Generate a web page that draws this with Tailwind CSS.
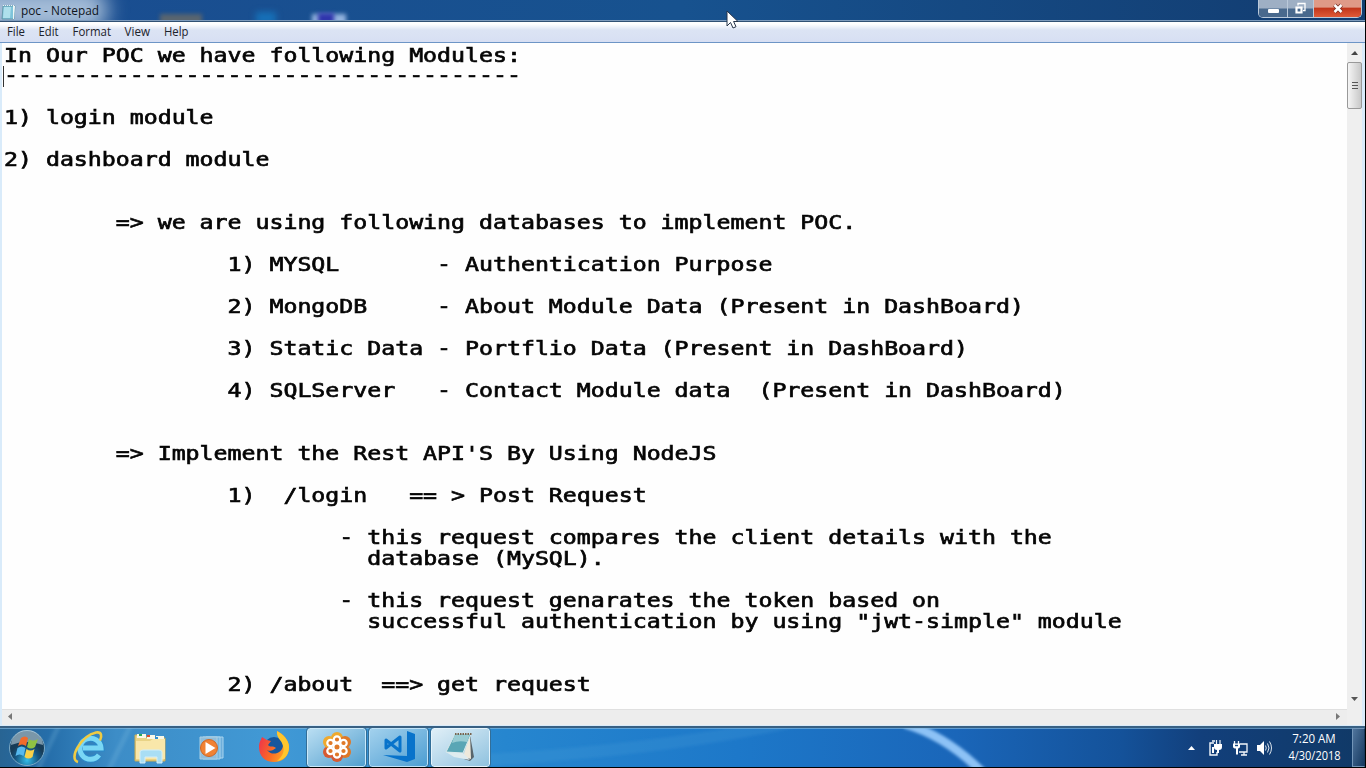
<!DOCTYPE html>
<html lang="en">
<head>
<meta charset="utf-8">
<title>poc - Notepad</title>
<script src="https://cdn.jsdelivr.net/npm/@tailwindcss/browser@4"></script>
</head>
<body class="w-[1366px] h-[768px] overflow-hidden bg-black font-['Open_Sans','Noto_Sans',sans-serif]">
<div class="flex h-[768px] w-[1366px] flex-col">
  <!-- Notepad window -->
  <main class="flex h-[726px] w-[1365px] flex-col bg-[#d9ebfa]">
    <header class="relative flex h-[21px] shrink-0 items-start justify-between overflow-hidden border-b border-[#7f9cbd] bg-linear-to-r from-[#1a4d91] via-[#17528f] to-[#123c70]">
      <div class="absolute -left-8 -top-3 h-[44px] w-[140px] rounded-full bg-[#d3e1ef]/75 blur-[10px]"></div>
      <div class="absolute left-[160px] top-[14px] h-3 w-[42px] bg-[#59656f] blur-[2px]"></div>
      <div class="absolute left-[256px] top-[12px] h-3 w-5 bg-[#1670b8] blur-[3px]"></div>
      <div class="absolute left-[312px] top-[14px] h-3 w-[34px] bg-[#93b3df] blur-[2px]"></div>
      <div class="absolute left-[318px] top-[13px] h-3 w-[16px] bg-[#2f35ac] blur-[2px]"></div>
      <div class="relative flex items-center">
        <svg class="ml-px mt-[2px]" width="15" height="16" viewBox="0 0 15 16"><path d="M2 2h12l-1 13H1z" fill="#7fc4da" stroke="#568999" stroke-width=".7"/><path d="M3 3h7l-1 11H2z" fill="#aee0ec"/><path d="M12 2h2l-1 13h-1z" fill="#eef6f6"/><path d="M2 1.500h12" stroke="#e5f4f6" stroke-dasharray="1 1"/></svg>
        <svg class="ml-[5px] mt-px" width="100" height="20"><text x="0" y="13.5" textLength="78" lengthAdjust="spacingAndGlyphs" font-size="11.8" fill="#10151c">poc - Notepad</text></svg>
      </div>
      <div class="relative mr-[3px] flex h-[18px] w-[104px] overflow-hidden rounded-b-[5px] border border-t-0 border-[#bac9da]">
        <div class="flex w-[29px] items-center justify-center border-r border-[#bac9da] bg-linear-to-b from-[#9eafc4] from-45% to-[#49698d] to-55%"><span class="mt-[4px] h-[4px] w-[11px] rounded-[1px] bg-white"></span></div>
        <div class="flex w-[26px] items-center justify-center border-r border-[#bac9da] bg-linear-to-b from-[#9eafc4] from-45% to-[#49698d] to-55%"><svg class="-ml-[2px]" width="14" height="14" viewBox="0 0 14 14" fill="none"><path d="M5 3.500V1.500h7v7h-2" stroke="#fff" stroke-width="1.3"/><path d="M3.500 5.500h5v5h-5z" stroke="#fff" stroke-width="2.200"/></svg></div>
        <div class="flex flex-1 items-center justify-center bg-linear-to-b from-[#df9a87] from-40% via-[#c2371c] via-50% to-[#df5a37]"><svg width="14" height="14" viewBox="0 0 14 14"><path d="M3.500 3l7 7m0-7l-7 7" stroke="#793024" stroke-width="4"/><path d="M3.500 3l7 7m0-7l-7 7" stroke="#fff" stroke-width="2.500"/></svg></div>
      </div>
    </header>
    <nav class="h-[22px] shrink-0 border-t border-b border-t-[#315174] border-b-[#6d95c6] bg-linear-to-b from-white from-10% via-[#dce4f4] via-40% to-[#d7dff3]">
      <svg class="block" width="220" height="20" font-size="11.8" fill="#1c222b"><text x="7" y="14.3" textLength="18" lengthAdjust="spacingAndGlyphs">File</text><text x="38.5" y="14.3" textLength="20" lengthAdjust="spacingAndGlyphs">Edit</text><text x="72.500" y="14.3" textLength="38.500" lengthAdjust="spacingAndGlyphs">Format</text><text x="124.5" y="14.3" textLength="25.500" lengthAdjust="spacingAndGlyphs">View</text><text x="164" y="14.3" textLength="24.500" lengthAdjust="spacingAndGlyphs">Help</text></svg>
    </nav>
    <div class="flex min-h-0 flex-1 pl-[2px] pr-[3px]">
      <section class="flex min-w-0 flex-1 flex-col">
        <div class="relative h-[666px] overflow-hidden bg-[#fefefe] pl-[1.5px]">
          <span class="absolute left-px top-[23px] h-[21px] w-px bg-[#333]"></span>
          <pre class="origin-top-left scale-x-[1.2213] pt-[1.5px] font-['DejaVu_Sans_Mono',monospace] text-[19px] leading-[20.97px] text-[#050505] [-webkit-text-stroke:0.65px_#050505] [tab-size:8]">In Our POC we have following Modules:
-------------------------------------

1) login module

2) dashboard module


	=> we are using following databases to implement POC.

		1) MYSQL       - Authentication Purpose

		2) MongoDB     - About Module Data (Present in DashBoard)

		3) Static Data - Portflio Data (Present in DashBoard)

		4) SQLServer   - Contact Module data  (Present in DashBoard)


	=> Implement the Rest API'S By Using NodeJS

		1)  /login   == &gt; Post Request

			- this request compares the client details with the
			  database (MySQL).

			- this request genarates the token based on
			  successful authentication by using "jwt-simple" module


		2) /about  ==&gt; get request</pre>
        </div>
        <div class="flex h-4 items-center justify-between border-t border-[#e0e0e0] bg-[#ededed] pb-[2px] pl-[6px] pr-[7px]">
          <svg width="5" height="7"><path d="M4 0v7L0 3.5z" fill="#777"/></svg>
          <svg width="5" height="7"><path d="M1 0v7l4-3.5z" fill="#777"/></svg>
        </div>
      </section>
      <aside class="flex h-[682px] w-[15px] shrink-0 flex-col items-center bg-[#efefef]">
        <svg class="mt-[8px]" width="7" height="5"><path d="M0 4h7L4 0z" fill="#444"/></svg>
        <div class="mt-[6px] flex h-[47px] w-[15px] flex-col items-center justify-center gap-[2px] rounded-[2px] border border-[#999] bg-linear-to-r from-[#f5f5f5] to-[#c8c8c8]"><i class="h-px w-[6px] bg-[#555]"></i><i class="h-px w-[6px] bg-[#555]"></i><i class="h-px w-[6px] bg-[#555]"></i></div>
        <svg class="mt-auto mb-[24px]" width="7" height="4"><path d="M0 0h7L3.5 4z" fill="#555"/></svg>
      </aside>
    </div>
  </main>
  <!-- Taskbar -->
  <footer class="relative flex h-[41px] w-[1365px] shrink-0 items-stretch overflow-hidden border-t-2 border-t-[#386083] bg-[#247fc9]">
    <svg class="absolute inset-0" width="1366" height="39" viewBox="0 0 1366 39">
      <defs><linearGradient id="sky"><stop stop-color="#286493"/><stop offset=".035" stop-color="#256eaa"/><stop offset=".085" stop-color="#3d8dc7"/><stop offset=".2" stop-color="#4199d5"/><stop offset=".37" stop-color="#2686cf"/><stop offset=".54" stop-color="#1d78c9"/><stop offset=".7" stop-color="#1a66b9"/><stop offset=".82" stop-color="#14529a"/><stop offset=".88" stop-color="#123f7b"/><stop offset="1" stop-color="#103966"/></linearGradient><filter id="soft" x="-20%" y="-40%" width="140%" height="180%"><feGaussianBlur stdDeviation="1.6"/></filter></defs>
      <path d="M0 0h1366v39H0z" fill="url(#sky)"/>
      <path d="M905-4Q946 8 982 44" stroke="#8dc2f6" stroke-width="9" fill="none" filter="url(#soft)"/>
      <path d="M490 32Q680 20 800-8" stroke="#51a5dd" stroke-opacity=".2" stroke-width="12" fill="none" filter="url(#soft)"/>
      <path d="M60-5l-24 50M132-5l-25 50" stroke="#8bc6e7" stroke-opacity=".2" stroke-width="5" filter="url(#soft)"/>
      <path d="M0 .5h1366" stroke="#83b9de" stroke-opacity=".65"/>
    </svg>
    <div class="relative flex w-[307px] items-center">
      <svg class="ml-[8px]" width="38" height="38" viewBox="0 0 38 38"><defs><radialGradient id="orb" cy=".85"><stop stop-color="#35bce8"/><stop offset=".65" stop-color="#155783"/><stop offset="1" stop-color="#173c57"/></radialGradient></defs><circle cx="19" cy="19" r="17.500" fill="url(#orb)" stroke="#7aa9c6"/><path d="M3 16a16 15 0 0132 0Q18 10 3 16z" fill="#bdd3df" opacity=".6"/><path d="M13 9q4-3 7 0l-2 8q-4-3-8 0z" fill="#f06b2b"/><path d="M21 10q4 3 9 0l-3 8q-4 3-8 0z" fill="#8fc343"/><path d="M9.500 19q4-3 8 0l-2 8q-4-3-8 0z" fill="#56b9ee"/><path d="M18.500 20q4 3 8 0l-2 8q-4 3-8 0z" fill="#f8d149"/></svg>
      <svg class="ml-[25px]" width="36" height="36" viewBox="0 0 36 36"><path d="M28 25A10.500 10.500 0 1130 18H12" fill="none" stroke="#2b88c8" stroke-width="7"/><path d="M28 25A10.500 10.500 0 1130 18H12" fill="none" stroke="#79d7f5" stroke-width="5"/><path d="M7 32C-3 29 10 6 25 2.500c6-1 6 4 4 8" fill="none" stroke="#efcb43" stroke-width="2.600"/></svg>
      <svg class="ml-[26px]" width="36" height="36" viewBox="0 0 36 36"><path d="M2 5h10l2 3h18v23H2z" fill="#e9d386" stroke="#c8ac57"/><path d="M4 4h9v4H4zM14 5h8v4h-8zM23 6h8v4h-8z" fill="#f8f8e8"/><path d="M6 5h3" stroke="#29a957" stroke-width="2"/><path d="M14 6h3" stroke="#df4b2a" stroke-width="2"/><path d="M22 8h3" stroke="#328ecf" stroke-width="2"/><path d="M3 11h14l3-2h12v20H3z" fill="#f9e7aa"/><path d="M7 33V22q0-2 3-2h16q3 0 3 2v11h-5v-6H12v6z" fill="#a9def4" stroke="#d3eef8"/></svg>
      <svg class="ml-[28px]" width="30" height="30" viewBox="0 0 30 30"><path d="M9 4h17v21H9z" fill="#6daedb" stroke="#a9d5ef"/><path d="M6 4h17v22H6z" fill="#78b7df" stroke="#a9d5ef"/><path d="M3 4h17v22H3z" fill="#91bedb" stroke="#a9cfe4"/><circle cx="12" cy="15" r="8.500" fill="#f18233" stroke="#cf6825"/><path d="M8.500 9v12l10-6z" fill="#fff"/></svg>
      <svg class="ml-[31px] -mt-[3px]" width="32" height="32" viewBox="0 0 32 32"><defs><linearGradient id="fox" x1="0" y1=".3" x2="1" y2=".7"><stop stop-color="#ee344b"/><stop offset=".5" stop-color="#f96b25"/><stop offset="1" stop-color="#ffb326"/></linearGradient></defs><circle cx="16" cy="17" r="10" fill="#16579d"/><path d="M4 7l5 3 4 1-3 4c2 3 5 0 8 3-3 2-5 4-9 2 5 7 16 3 16-5 0-6-6-7-6-14 6 3 12 9 12 16 0 9-6 15-15 15S1 26 1 17C1 12 3 10 4 7z" fill="url(#fox)"/><path d="M19 1c6 3 12 9 12 16 0 8-5 13-12 14 5-4 8-9 6-15-1-6-7-8-6-15z" fill="#ffc62d"/></svg>
    </div>
    <div class="relative flex gap-[3px]">
      <div class="flex w-[59px] items-center justify-center rounded-[3px] border border-[#cae9fa] bg-linear-to-br from-[#b9def2] to-[#509fce] outline outline-[#326e98]">
        <svg class="-mt-px" width="34" height="34" viewBox="-17 -17 34 34"><g fill="#df7827"><circle r="11"/><circle cy="-9" r="6" fill="#efa92d"/><circle cx="8" cy="-5" r="6"/><circle cx="8" cy="5" r="6"/><circle cy="9" r="6" fill="#d75a32"/><circle cx="-8" cy="5" r="6" fill="#d75a32"/><circle cx="-8" cy="-5" r="6" fill="#efa92d"/></g><g fill="#e07928" stroke="#fff" stroke-width="2.200"><circle cy="-7.500" r="3.200"/><circle cx="6.500" cy="-4" r="3.200"/><circle cx="6.500" cy="4" r="3.200"/><circle cy="7.500" r="3.200"/><circle cx="-6.500" cy="4" r="3.200"/><circle cx="-6.500" cy="-4" r="3.200"/><circle r="3.500" stroke-width="2"/></g></svg>
      </div>
      <div class="flex w-[59px] items-center justify-center rounded-[3px] border border-[#bee2f8] bg-linear-to-br from-[#a2d1ed] to-[#4b9ed2] outline outline-[#326e98]">
        <svg class="-mt-px" width="36" height="34" viewBox="0 0 36 34"><path d="M26 1l8 3v25l-8 3-24-7 24 1z" fill="#0873cb"/><path d="M5 10l14 11V7L5 18z" fill="none" stroke="#0873cb" stroke-width="3" stroke-linejoin="round"/></svg>
      </div>
      <div class="flex w-[59px] items-center justify-center rounded-[3px] border border-[#e5f4fc] bg-linear-to-br from-[#e0eff7] to-[#8fc2df] outline outline-[#326e98]">
        <svg class="-mt-px" width="34" height="34" viewBox="0 0 34 34"><path d="M26 5l4 22-4 4-6-2z" fill="#59656b"/><path d="M26 5l1 24-8-2z" fill="#eee9db"/><path d="M11 4h16l-8 19-17-1z" fill="#5aa6b5" stroke="#d8e9ea"/><path d="M11 4h15l-3 8q-8-2-15 1z" fill="#98ccd3"/><path d="M2 22l17 1 7 7-16-3z" fill="#dfecef"/><path d="M11 4h17" stroke="#77634e" stroke-width="2" stroke-dasharray="1.5 1"/></svg>
      </div>
    </div>
    <div class="relative ml-auto flex items-center">
      <svg width="90" height="24" viewBox="0 0 90 24" fill="none" stroke="#f4f8fc" stroke-width="1.4"><path d="M1 14h7l-3.500-4z" fill="#fff" stroke="none"/><g transform="translate(-1 0)"><path d="M28 7h-4v12h7v-3M26 5h3"/><path d="M26 11h2v6h-2z" fill="#fff" stroke="none"/><path d="M30.500 4v4m3.500-4v4" stroke-width="1.200"/><path d="M28 8h8v3q0 3-3 3v3h-2v-3q-3 0-3-3z" fill="#fff" stroke="none"/><path d="M54 8h7v8h-8M55 19h6m-3-3v3M48.500 5v3m4-3v3" stroke-width="1.300"/><path d="M47 7.500h7v3q0 2-2 2v6h-2v-6q-3 0-3-2z" fill="#fff" stroke="none"/><path d="M49 9.500h3" stroke="#174b83"/><path d="M71 9h3l4-4v14l-4-4h-3z" fill="#fff" stroke="none"/><path d="M79.500 9.500q1.500 2.500 0 5m2-7q3 4.500 0 9m2-11q4 6.500 0 13" stroke-width=".9"/></g></svg>
      <svg class="ml-[7px]" width="68" height="39" fill="#fff" font-size="11.8" text-anchor="middle"><text x="30" y="15" textLength="43.500" lengthAdjust="spacingAndGlyphs">7:20 AM</text><text x="30.500" y="32" textLength="52" lengthAdjust="spacingAndGlyphs">4/30/2018</text></svg>
      <div class="h-[39px] w-[13px] border border-[#7295b8] border-r-[#18395d] bg-linear-to-br from-[#50759d] to-[#153960]"></div>
    </div>
  </footer>
</div>
<!-- Mouse pointer -->
<svg class="absolute left-[726px] top-[10px]" width="14" height="20" viewBox="0 0 14 20"><path d="M1 1v15l3.500-3.500L7 18l3-1.300-2.400-5.200H12z" fill="#fff" stroke="#26344a" stroke-width="1"/></svg>
</body>
</html>
